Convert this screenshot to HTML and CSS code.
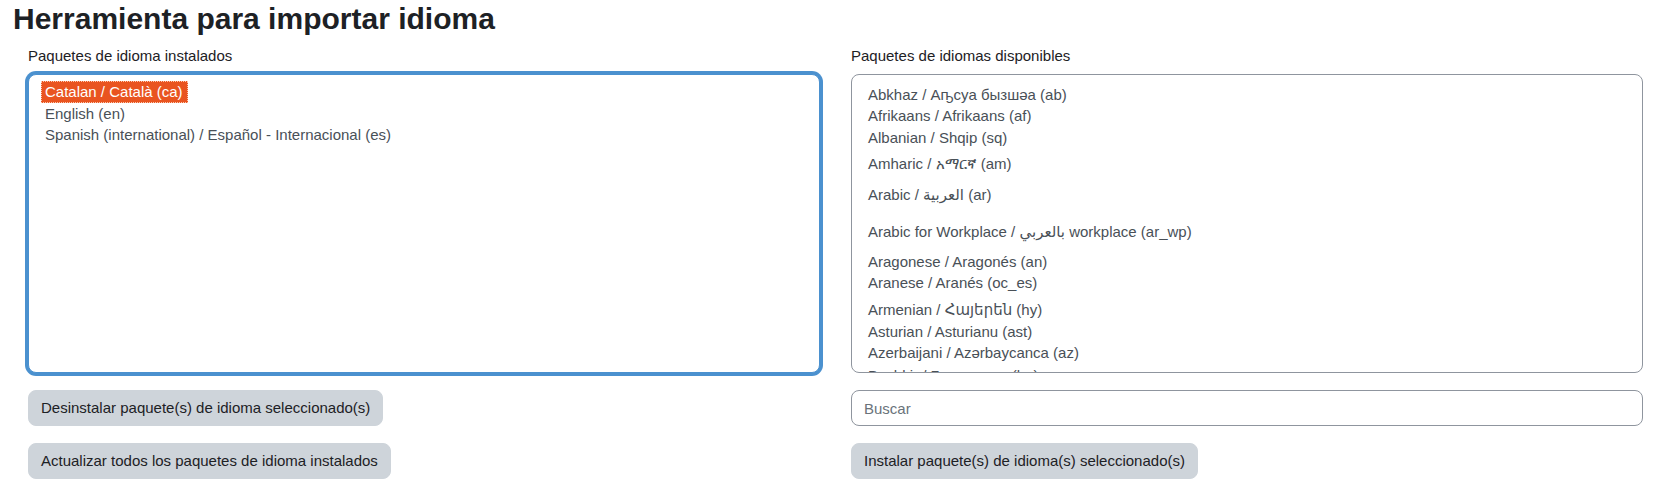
FILE: index.html
```html
<!DOCTYPE html>
<html lang="es">
<head>
<meta charset="utf-8">
<title>Herramienta para importar idioma</title>
<link rel="stylesheet" href="styles.css">
</head>
<body>
<h2 class="page-title">Herramienta para importar idioma</h2>
<form class="langimport">
  <div class="lang-col">
    <label class="col-label">Paquetes de idioma instalados</label>
    <div class="listbox is-focused" role="listbox" aria-multiselectable="true">
      <div class="opt" role="option" aria-selected="true"><span class="opt-sel">Catalan / Català (ca)</span></div>
      <div class="opt" role="option">English (en)</div>
      <div class="opt" role="option">Spanish (international) / Español - Internacional (es)</div>
    </div>
    <div class="actions">
      <button type="button" class="btn">Desinstalar paquete(s) de idioma seleccionado(s)</button>
      <button type="button" class="btn">Actualizar todos los paquetes de idioma instalados</button>
    </div>
  </div>
  <div class="lang-col">
    <label class="col-label">Paquetes de idiomas disponibles</label>
    <div class="listbox" role="listbox" aria-multiselectable="true">
      <div class="opt opt-ab" role="option">Abkhaz / Аҧсуа бызшәа (ab)</div>
      <div class="opt" role="option">Afrikaans / Afrikaans (af)</div>
      <div class="opt" role="option">Albanian / Shqip (sq)</div>
      <div class="opt opt-am" role="option">Amharic / አማርኛ (am)</div>
      <div class="opt opt-ar" role="option">Arabic / العربية (ar)</div>
      <div class="opt opt-arw" role="option">Arabic for Workplace / بالعربي workplace (ar_wp)</div>
      <div class="opt" role="option">Aragonese / Aragonés (an)</div>
      <div class="opt" role="option">Aranese / Aranés (oc_es)</div>
      <div class="opt opt-hy" role="option">Armenian / Հայերեն (hy)</div>
      <div class="opt" role="option">Asturian / Asturianu (ast)</div>
      <div class="opt" role="option">Azerbaijani / Azərbaycanca (az)</div>
      <div class="opt opt-ba" role="option">Bashkir / Башҡортса (ba)</div>
    </div>
    <div class="actions">
      <input type="text" class="search" placeholder="Buscar">
      <button type="button" class="btn">Instalar paquete(s) de idioma(s) seleccionado(s)</button>
    </div>
  </div>
</form>
</body>
</html>
```
FILE: styles.css
```css
html, body {
  margin: 0;
  padding: 0;
  background: #ffffff;
}

body {
  font-family: "Liberation Sans", Arial, "DejaVu Sans", sans-serif;
  font-size: 15px;
  line-height: 1.5;
  color: #1d2125;
}

.page-title {
  margin: 1.3px 0 0 13px;
  font-size: 30px;
  line-height: 36px;
  font-weight: 700;
  color: #1d2125;
}

.langimport {
  display: grid;
  grid-template-columns: 1fr 1fr;
  column-gap: 31px;
  padding: 0 21px 0 28px;
  margin-top: 7.5px;
}

.lang-col {
  display: flex;
  flex-direction: column;
  align-items: flex-start;
  min-width: 0;
}

.col-label {
  display: block;
  font-size: 15px;
  line-height: 22.5px;
  margin-bottom: 6.7px;
  color: #1d2125;
}

.listbox {
  width: 100%;
  height: 299px;
  box-sizing: border-box;
  border: 1px solid #8f959e;
  border-radius: 8px;
  padding: 6px 12px;
  overflow: hidden;
  color: #495057;
  background: #ffffff;
}

.listbox.is-focused {
  border-color: #4b91cf;
  box-shadow: 0 0 0 3px rgba(15, 108, 191, 0.75);
}

.opt {
  height: 21.7px;
  line-height: 21.7px;
  padding-left: 4px;
  white-space: nowrap;
}

.opt-sel {
  display: inline-block;
  margin-left: -4px;
  padding: 0 5px 0 4px;
  height: 22px;
  background: #e95420;
  color: #ffffff;
  outline: 1px dotted #ffc8ad;
  outline-offset: -1px;
}

.opt-ab { padding-top: 2.65px; }
.opt-am { padding-top: 4.2px; padding-bottom: 2px; }
.opt-ar { padding-top: 7.3px; padding-bottom: 5px; }
.opt-arw { padding-top: 10px; padding-bottom: 8.3px; }
.opt-hy { padding-top: 5px; }
.opt-ba { padding-top: 1.4px; }

.actions {
  display: flex;
  flex-direction: column;
  align-items: flex-start;
  gap: 16.5px;
  margin-top: 17px;
  width: 100%;
}

.btn {
  font-family: inherit;
  font-size: 15px;
  line-height: 22.5px;
  padding: 6px 12px;
  border: 1px solid #ced4da;
  border-radius: 8px;
  background: #ced4da;
  color: #1d2125;
  cursor: pointer;
}

.search {
  width: 100%;
  box-sizing: border-box;
  height: 36.5px;
  padding: 6px 12px;
  font-family: inherit;
  font-size: 15px;
  line-height: 22.5px;
  color: #495057;
  border: 1px solid #8f959e;
  border-radius: 8px;
  background: #ffffff;
}

.search::placeholder {
  color: #6a737b;
  opacity: 1;
}
```
